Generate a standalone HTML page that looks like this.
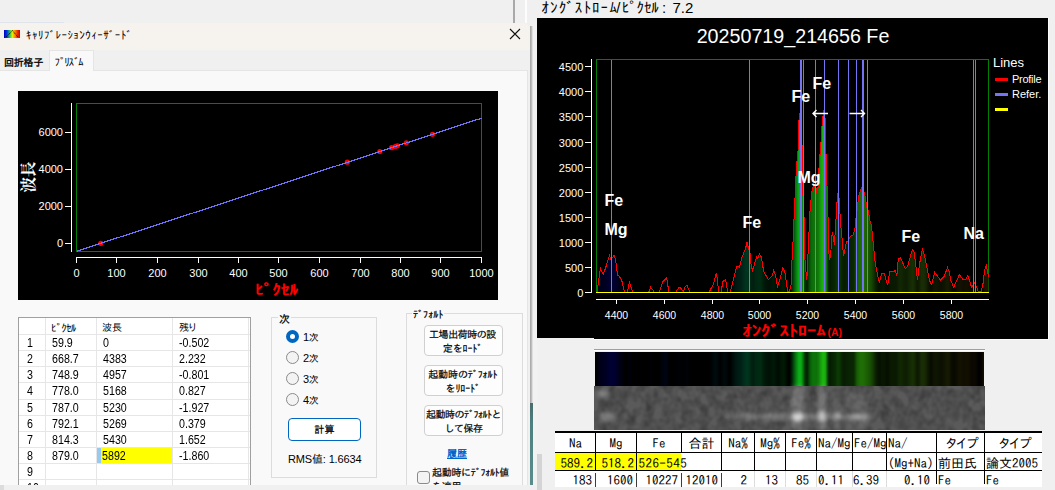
<!DOCTYPE html>
<html lang="ja"><head><meta charset="utf-8"><title>ｷｬﾘﾌﾞﾚｰｼｮﾝｳｨｰｻﾞｰﾄﾞ</title>
<style>
*{box-sizing:border-box;margin:0;padding:0}
html,body{width:1055px;height:490px;overflow:hidden;background:#f0f0f0}
body{position:relative;font-family:"Liberation Sans","IPAGothic",sans-serif;font-size:12px;color:#000}
.a{position:absolute}
.ui{font-family:"Liberation Sans","IPAGothic",sans-serif;font-size:12px;line-height:12px;white-space:nowrap}
.hk{font-family:"Liberation Sans","IPAGothic",sans-serif}
#dlg{left:0;top:23px;width:530px;height:462px;background:#f0f0f0;overflow:hidden;border-top-right-radius:7px}
#title{left:0;top:0;width:530px;height:27px;background:#f6f3ef}
#page{left:-1px;top:47px;width:529px;height:420px;background:#f9f9f9;border:1px solid #e5e5e5}
#tabsel{left:49px;top:27px;width:45px;height:21px;background:#f9f9f9;border:1px solid #e5e5e5;border-bottom:none}
.grp{border:1px solid #dcdcdc}
.btn{background:#fdfdfd;border:1px solid #d0d0d0;border-radius:4px;text-align:center}
.radio{width:13px;height:13px;border-radius:50%;border:1px solid #8a8a8a;background:#f3f3f3}
.radio.on{border:4.3px solid #0067c0;background:#fff}
table.g{border-collapse:collapse}
#grid{left:18px;top:294px;width:233px;height:180px;background:#fff;border:1px solid #a0a0a0;overflow:hidden}
#grid .vl{position:absolute;top:0;width:1px;height:200px;background:#e6e6e6}
#grid .hl{position:absolute;left:0;height:1px;width:231px;background:#e6e6e6}
#grid .t{position:absolute;font-size:12px;line-height:12px;white-space:nowrap;transform:scaleX(0.89);transform-origin:0 0}
#rt{left:555px;top:431px;width:487px;height:56px;background:#fff;overflow:hidden;font-family:"IPAGothic","Liberation Sans",sans-serif;font-size:13px;line-height:13px}
#rt .c{position:absolute;white-space:nowrap;overflow:hidden;height:17px;padding-top:3px}
#rt .v{position:absolute;width:1px;background:#000}
#rt .h{position:absolute;height:1px;background:#000;left:0;width:487px}
</style></head><body>
<div class="a" style="left:513px;top:0;width:2px;height:23px;background:#a9a9a9"></div>
<div class="a" style="left:525px;top:0;width:2px;height:23px;background:#fdfdfd"></div>
<div class="a" style="left:0;top:22px;width:64px;height:1px;background:#dfe3ea"></div>
<div class="a" style="left:533px;top:23px;width:4px;height:467px;background:#f2f2f2"></div>
<div class="a" style="left:1048px;top:18px;width:1.4px;height:322px;background:#fcfcfc"></div>
<div class="a" style="left:594px;top:339px;width:455px;height:1.2px;background:#fcfcfc"></div>
<div class="a hk" style="left:0;top:0px;font-size:15px;line-height:16px;white-space:nowrap"><span class="a" style="left:541.5px;letter-spacing:1.1px">ｵﾝｸﾞｽﾄﾛｰﾑ</span><span class="a" style="left:616.3px">/</span><span class="a" style="left:621.8px;letter-spacing:-0.2px">ﾋﾟｸｾﾙ</span><span class="a" style="left:662px">:</span><span class="a" style="left:672.5px">7.2</span></div>
<svg class="a" style="left:0;top:0" width="1055" height="490" viewBox="0 0 1055 490"><defs><linearGradient id="sg" gradientUnits="userSpaceOnUse" x1="596" x2="988.6" y1="0" y2="0"><stop offset="0.0000" stop-color="#000001"/>
<stop offset="0.0038" stop-color="#000008"/>
<stop offset="0.0076" stop-color="#000014"/>
<stop offset="0.0115" stop-color="#00001c"/>
<stop offset="0.0153" stop-color="#00001d"/>
<stop offset="0.0191" stop-color="#00001d"/>
<stop offset="0.0229" stop-color="#000021"/>
<stop offset="0.0267" stop-color="#000027"/>
<stop offset="0.0306" stop-color="#00002e"/>
<stop offset="0.0344" stop-color="#000031"/>
<stop offset="0.0382" stop-color="#000032"/>
<stop offset="0.0420" stop-color="#000032"/>
<stop offset="0.0458" stop-color="#000032"/>
<stop offset="0.0497" stop-color="#00002c"/>
<stop offset="0.0535" stop-color="#000022"/>
<stop offset="0.0573" stop-color="#00001a"/>
<stop offset="0.0611" stop-color="#000016"/>
<stop offset="0.0650" stop-color="#000011"/>
<stop offset="0.0688" stop-color="#00000a"/>
<stop offset="0.0726" stop-color="#000003"/>
<stop offset="0.0764" stop-color="#000000"/>
<stop offset="0.0802" stop-color="#000004"/>
<stop offset="0.0841" stop-color="#000009"/>
<stop offset="0.0879" stop-color="#00000a"/>
<stop offset="0.0917" stop-color="#000004"/>
<stop offset="0.0955" stop-color="#000000"/>
<stop offset="0.0993" stop-color="#000000"/>
<stop offset="0.1032" stop-color="#000000"/>
<stop offset="0.1070" stop-color="#000000"/>
<stop offset="0.1108" stop-color="#000000"/>
<stop offset="0.1146" stop-color="#000000"/>
<stop offset="0.1184" stop-color="#000000"/>
<stop offset="0.1223" stop-color="#000000"/>
<stop offset="0.1261" stop-color="#000000"/>
<stop offset="0.1299" stop-color="#000000"/>
<stop offset="0.1337" stop-color="#000001"/>
<stop offset="0.1375" stop-color="#000004"/>
<stop offset="0.1414" stop-color="#000005"/>
<stop offset="0.1452" stop-color="#000003"/>
<stop offset="0.1490" stop-color="#000001"/>
<stop offset="0.1528" stop-color="#000000"/>
<stop offset="0.1566" stop-color="#000000"/>
<stop offset="0.1605" stop-color="#000001"/>
<stop offset="0.1643" stop-color="#000106"/>
<stop offset="0.1681" stop-color="#00020b"/>
<stop offset="0.1719" stop-color="#00030f"/>
<stop offset="0.1758" stop-color="#000312"/>
<stop offset="0.1796" stop-color="#000310"/>
<stop offset="0.1834" stop-color="#000209"/>
<stop offset="0.1872" stop-color="#000002"/>
<stop offset="0.1910" stop-color="#000000"/>
<stop offset="0.1949" stop-color="#000000"/>
<stop offset="0.1987" stop-color="#000000"/>
<stop offset="0.2025" stop-color="#000000"/>
<stop offset="0.2063" stop-color="#000003"/>
<stop offset="0.2101" stop-color="#000105"/>
<stop offset="0.2140" stop-color="#000106"/>
<stop offset="0.2178" stop-color="#000104"/>
<stop offset="0.2216" stop-color="#000103"/>
<stop offset="0.2254" stop-color="#000105"/>
<stop offset="0.2292" stop-color="#000208"/>
<stop offset="0.2331" stop-color="#000207"/>
<stop offset="0.2369" stop-color="#000103"/>
<stop offset="0.2407" stop-color="#000000"/>
<stop offset="0.2445" stop-color="#000000"/>
<stop offset="0.2483" stop-color="#000000"/>
<stop offset="0.2522" stop-color="#000000"/>
<stop offset="0.2560" stop-color="#000000"/>
<stop offset="0.2598" stop-color="#000000"/>
<stop offset="0.2636" stop-color="#000000"/>
<stop offset="0.2674" stop-color="#000000"/>
<stop offset="0.2713" stop-color="#000000"/>
<stop offset="0.2751" stop-color="#000000"/>
<stop offset="0.2789" stop-color="#000000"/>
<stop offset="0.2827" stop-color="#000000"/>
<stop offset="0.2866" stop-color="#000000"/>
<stop offset="0.2904" stop-color="#000102"/>
<stop offset="0.2942" stop-color="#000305"/>
<stop offset="0.2980" stop-color="#000609"/>
<stop offset="0.3018" stop-color="#000a0d"/>
<stop offset="0.3057" stop-color="#000b0f"/>
<stop offset="0.3095" stop-color="#00080a"/>
<stop offset="0.3133" stop-color="#000203"/>
<stop offset="0.3171" stop-color="#000101"/>
<stop offset="0.3209" stop-color="#000506"/>
<stop offset="0.3248" stop-color="#00090a"/>
<stop offset="0.3286" stop-color="#000a0a"/>
<stop offset="0.3324" stop-color="#000707"/>
<stop offset="0.3362" stop-color="#000202"/>
<stop offset="0.3400" stop-color="#000000"/>
<stop offset="0.3439" stop-color="#000403"/>
<stop offset="0.3477" stop-color="#000a08"/>
<stop offset="0.3515" stop-color="#00100d"/>
<stop offset="0.3553" stop-color="#001611"/>
<stop offset="0.3591" stop-color="#001a13"/>
<stop offset="0.3630" stop-color="#001c14"/>
<stop offset="0.3668" stop-color="#001f15"/>
<stop offset="0.3706" stop-color="#002417"/>
<stop offset="0.3744" stop-color="#00291a"/>
<stop offset="0.3782" stop-color="#002e1c"/>
<stop offset="0.3821" stop-color="#00331d"/>
<stop offset="0.3859" stop-color="#00341d"/>
<stop offset="0.3897" stop-color="#00301a"/>
<stop offset="0.3935" stop-color="#002714"/>
<stop offset="0.3974" stop-color="#002010"/>
<stop offset="0.4012" stop-color="#001f0f"/>
<stop offset="0.4050" stop-color="#002411"/>
<stop offset="0.4088" stop-color="#002712"/>
<stop offset="0.4126" stop-color="#002a13"/>
<stop offset="0.4165" stop-color="#002b12"/>
<stop offset="0.4203" stop-color="#002911"/>
<stop offset="0.4241" stop-color="#00220d"/>
<stop offset="0.4279" stop-color="#001b0a"/>
<stop offset="0.4317" stop-color="#001608"/>
<stop offset="0.4356" stop-color="#001307"/>
<stop offset="0.4394" stop-color="#001206"/>
<stop offset="0.4432" stop-color="#001206"/>
<stop offset="0.4470" stop-color="#001506"/>
<stop offset="0.4508" stop-color="#001707"/>
<stop offset="0.4547" stop-color="#001706"/>
<stop offset="0.4585" stop-color="#001104"/>
<stop offset="0.4623" stop-color="#000d03"/>
<stop offset="0.4661" stop-color="#000d03"/>
<stop offset="0.4699" stop-color="#001304"/>
<stop offset="0.4738" stop-color="#001905"/>
<stop offset="0.4776" stop-color="#001b05"/>
<stop offset="0.4814" stop-color="#001604"/>
<stop offset="0.4852" stop-color="#000c02"/>
<stop offset="0.4890" stop-color="#000400"/>
<stop offset="0.4929" stop-color="#000300"/>
<stop offset="0.4967" stop-color="#001403"/>
<stop offset="0.5005" stop-color="#013108"/>
<stop offset="0.5043" stop-color="#03530c"/>
<stop offset="0.5082" stop-color="#057211"/>
<stop offset="0.5120" stop-color="#088e14"/>
<stop offset="0.5158" stop-color="#0aa716"/>
<stop offset="0.5196" stop-color="#0cb216"/>
<stop offset="0.5234" stop-color="#0ba013"/>
<stop offset="0.5273" stop-color="#09770d"/>
<stop offset="0.5311" stop-color="#054407"/>
<stop offset="0.5349" stop-color="#032503"/>
<stop offset="0.5387" stop-color="#032703"/>
<stop offset="0.5425" stop-color="#064306"/>
<stop offset="0.5464" stop-color="#0a5e08"/>
<stop offset="0.5502" stop-color="#0c6d09"/>
<stop offset="0.5540" stop-color="#0d720a"/>
<stop offset="0.5578" stop-color="#0e730a"/>
<stop offset="0.5616" stop-color="#0e7109"/>
<stop offset="0.5655" stop-color="#10790a"/>
<stop offset="0.5693" stop-color="#138b0b"/>
<stop offset="0.5731" stop-color="#16a00d"/>
<stop offset="0.5769" stop-color="#1ab00e"/>
<stop offset="0.5807" stop-color="#1bb60f"/>
<stop offset="0.5846" stop-color="#19a10d"/>
<stop offset="0.5884" stop-color="#106207"/>
<stop offset="0.5922" stop-color="#072b03"/>
<stop offset="0.5960" stop-color="#041c02"/>
<stop offset="0.5998" stop-color="#052002"/>
<stop offset="0.6037" stop-color="#062402"/>
<stop offset="0.6075" stop-color="#072602"/>
<stop offset="0.6113" stop-color="#092f03"/>
<stop offset="0.6151" stop-color="#0b3904"/>
<stop offset="0.6190" stop-color="#0b3904"/>
<stop offset="0.6228" stop-color="#092f03"/>
<stop offset="0.6266" stop-color="#072402"/>
<stop offset="0.6304" stop-color="#061e02"/>
<stop offset="0.6342" stop-color="#061d01"/>
<stop offset="0.6381" stop-color="#072102"/>
<stop offset="0.6419" stop-color="#082302"/>
<stop offset="0.6457" stop-color="#082402"/>
<stop offset="0.6495" stop-color="#092502"/>
<stop offset="0.6533" stop-color="#092602"/>
<stop offset="0.6572" stop-color="#0b2b02"/>
<stop offset="0.6610" stop-color="#114203"/>
<stop offset="0.6648" stop-color="#185a05"/>
<stop offset="0.6686" stop-color="#1b6405"/>
<stop offset="0.6724" stop-color="#1d6b05"/>
<stop offset="0.6763" stop-color="#1e6d05"/>
<stop offset="0.6801" stop-color="#1f6d06"/>
<stop offset="0.6839" stop-color="#1e6805"/>
<stop offset="0.6877" stop-color="#1d6205"/>
<stop offset="0.6915" stop-color="#1c5b05"/>
<stop offset="0.6954" stop-color="#1a5505"/>
<stop offset="0.6992" stop-color="#184d04"/>
<stop offset="0.7030" stop-color="#154304"/>
<stop offset="0.7068" stop-color="#113503"/>
<stop offset="0.7106" stop-color="#0d2702"/>
<stop offset="0.7145" stop-color="#091c01"/>
<stop offset="0.7183" stop-color="#071401"/>
<stop offset="0.7221" stop-color="#061101"/>
<stop offset="0.7259" stop-color="#071301"/>
<stop offset="0.7298" stop-color="#081601"/>
<stop offset="0.7336" stop-color="#081601"/>
<stop offset="0.7374" stop-color="#071201"/>
<stop offset="0.7412" stop-color="#050e01"/>
<stop offset="0.7450" stop-color="#071101"/>
<stop offset="0.7489" stop-color="#091701"/>
<stop offset="0.7527" stop-color="#0a1902"/>
<stop offset="0.7565" stop-color="#0a1a02"/>
<stop offset="0.7603" stop-color="#0a1902"/>
<stop offset="0.7641" stop-color="#0a1902"/>
<stop offset="0.7680" stop-color="#0d1e02"/>
<stop offset="0.7718" stop-color="#102603"/>
<stop offset="0.7756" stop-color="#112703"/>
<stop offset="0.7794" stop-color="#102503"/>
<stop offset="0.7832" stop-color="#0f2102"/>
<stop offset="0.7871" stop-color="#0e1f02"/>
<stop offset="0.7909" stop-color="#0e1e02"/>
<stop offset="0.7947" stop-color="#102203"/>
<stop offset="0.7985" stop-color="#122703"/>
<stop offset="0.8023" stop-color="#152c04"/>
<stop offset="0.8062" stop-color="#172f04"/>
<stop offset="0.8100" stop-color="#162c04"/>
<stop offset="0.8138" stop-color="#112303"/>
<stop offset="0.8176" stop-color="#0d1902"/>
<stop offset="0.8214" stop-color="#0e1a02"/>
<stop offset="0.8253" stop-color="#132404"/>
<stop offset="0.8291" stop-color="#182c05"/>
<stop offset="0.8329" stop-color="#1a2e05"/>
<stop offset="0.8367" stop-color="#182a05"/>
<stop offset="0.8406" stop-color="#152304"/>
<stop offset="0.8444" stop-color="#101a03"/>
<stop offset="0.8482" stop-color="#0b1302"/>
<stop offset="0.8520" stop-color="#080d01"/>
<stop offset="0.8558" stop-color="#090e01"/>
<stop offset="0.8597" stop-color="#0c1302"/>
<stop offset="0.8635" stop-color="#0e1603"/>
<stop offset="0.8673" stop-color="#0e1503"/>
<stop offset="0.8711" stop-color="#0d1302"/>
<stop offset="0.8749" stop-color="#0c1102"/>
<stop offset="0.8788" stop-color="#0c1002"/>
<stop offset="0.8826" stop-color="#0d1102"/>
<stop offset="0.8864" stop-color="#0f1402"/>
<stop offset="0.8902" stop-color="#121702"/>
<stop offset="0.8940" stop-color="#151a03"/>
<stop offset="0.8979" stop-color="#151802"/>
<stop offset="0.9017" stop-color="#111302"/>
<stop offset="0.9055" stop-color="#0b0d01"/>
<stop offset="0.9093" stop-color="#080900"/>
<stop offset="0.9131" stop-color="#080900"/>
<stop offset="0.9170" stop-color="#0b0b01"/>
<stop offset="0.9208" stop-color="#0f0f01"/>
<stop offset="0.9246" stop-color="#121101"/>
<stop offset="0.9284" stop-color="#131101"/>
<stop offset="0.9322" stop-color="#110f00"/>
<stop offset="0.9361" stop-color="#100e00"/>
<stop offset="0.9399" stop-color="#100e00"/>
<stop offset="0.9437" stop-color="#120f00"/>
<stop offset="0.9475" stop-color="#120f00"/>
<stop offset="0.9513" stop-color="#0f0c00"/>
<stop offset="0.9552" stop-color="#0b0800"/>
<stop offset="0.9590" stop-color="#0a0700"/>
<stop offset="0.9628" stop-color="#0b0800"/>
<stop offset="0.9666" stop-color="#0a0700"/>
<stop offset="0.9705" stop-color="#060400"/>
<stop offset="0.9743" stop-color="#020100"/>
<stop offset="0.9781" stop-color="#010000"/>
<stop offset="0.9819" stop-color="#050300"/>
<stop offset="0.9857" stop-color="#0f0a00"/>
<stop offset="0.9896" stop-color="#1b1100"/>
<stop offset="0.9934" stop-color="#211400"/>
<stop offset="0.9972" stop-color="#1e1200"/></linearGradient><filter id="nz" x="0" y="0" width="100%" height="100%"><feTurbulence type="fractalNoise" baseFrequency="0.11 0.1" numOctaves="2" seed="7"/><feColorMatrix type="matrix" values="0 0 0 0 0  0 0 0 0 0  0 0 0 0 0  0.45 0.35 0 0 -0.28"/><feComposite in2="SourceGraphic" operator="in"/></filter><filter id="bl"><feGaussianBlur stdDeviation="2.2"/></filter></defs><rect x="537" y="18" width="511" height="320" fill="#000"/><rect x="594" y="338" width="454" height="1" fill="#000"/><rect x="596.5" y="59.5" width="392" height="233" fill="none" stroke="#008000"/><polygon points="596.5,292 597.1,292.1 599.0,278.3 600.4,268.4 603.3,274.5 605.6,267.9 609.4,255.4 610.9,259.4 614.2,255.4 615.6,259.8 617.5,275.0 619.4,276.4 621.8,280.7 624.6,292.1 627.4,292.1 629.3,282.1 632.7,292.1 648.8,292.1 650.7,287.3 653.7,291.1 654.1,292.1 659.2,292.1 663.0,281.6 666.3,278.3 667.3,280.7 668.7,292.1 675.8,292.1 679.1,287.1 681.0,288.3 683.4,291.6 685.0,286.9 686.9,285.2 689.7,292.1 709.2,292.1 713.4,284.0 716.3,273.4 717.2,278.3 718.6,292.1 721.0,292.1 722.9,281.6 725.6,279.3 727.7,292.1 730.3,292.1 733.3,279.3 736.9,266.0 739.5,267.0 741.9,257.5 745.7,248.0 747.0,242.1 750.2,254.2 750.6,262.2 752.5,270.6 756.6,257.0 758.0,258.4 759.4,253.5 761.3,257.0 763.7,271.7 768.4,279.5 772.2,276.0 773.6,270.6 775.5,275.0 777.4,286.4 779.8,280.2 780.0,279.3 782.8,268.4 784.7,270.7 787.6,291.6 789.5,291.1 791.4,284.0 791.8,263.2 792.8,248.0 793.7,224.3 794.7,206.3 795.6,183.5 796.6,165.0 798.0,150.8 798.5,129.0 799.4,113.8 800.4,113.8 802.4,151.7 802.6,156.0 802.7,187.8 804.5,228.1 804.8,257.0 806.1,272.6 806.7,280.2 807.5,270.7 808.0,254.2 808.9,235.2 809.6,215.3 811.8,192.0 813.4,186.1 816.0,187.8 817.2,193.4 818.1,186.1 819.3,162.2 820.8,146.0 821.7,129.9 822.7,118.1 823.6,110.9 824.5,110.9 825.5,124.2 826.0,153.6 826.9,182.5 827.9,211.5 828.5,243.7 829.3,259.4 830.7,257.0 831.5,238.0 832.4,232.3 833.6,239.9 834.5,245.1 835.5,226.2 836.9,206.3 837.3,193.0 839.5,199.1 839.7,208.6 840.7,224.7 842.1,239.0 843.5,256.1 844.5,251.8 846.4,241.8 848.2,240.9 850.1,236.6 853.0,235.2 854.9,229.0 855.8,219.1 857.3,208.6 858.7,195.8 860.1,191.5 861.5,188.2 864.4,193.0 865.3,197.7 866.7,206.7 868.6,211.5 869.6,219.1 871.5,226.2 872.4,235.2 873.4,244.7 874.8,259.4 876.7,270.7 878.6,279.3 879.3,282.6 881.6,273.6 884.5,273.6 886.4,281.2 887.8,284.5 889.7,271.2 893.5,271.7 895.4,270.3 896.8,276.4 898.2,259.4 900.4,257.5 905.3,268.7 907.7,266.0 912.4,249.4 914.3,252.7 917.5,279.8 919.5,264.1 922.4,249.4 924.3,254.6 929.5,280.7 931.6,284.5 934.7,272.5 940.4,280.2 944.2,276.4 947.5,267.4 948.9,270.7 950.8,280.2 953.7,287.3 959.4,274.5 962.7,279.3 966.0,279.3 967.7,275.5 969.8,281.2 971.5,287.3 972.7,285.9 974.3,282.6 976.5,286.9 978.4,291.6 981.2,291.6 983.1,283.1 984.5,270.7 986.4,265.5 987.4,270.7 988.5,277.4 988.5,292" fill="url(#sg)"/><polyline points="597.1,292.1 599.0,278.3 600.4,268.4 603.3,274.5 605.6,267.9 609.4,255.4 610.9,259.4 614.2,255.4 615.6,259.8 617.5,275.0 619.4,276.4 621.8,280.7 624.6,292.1 627.4,292.1 629.3,282.1 632.7,292.1 648.8,292.1 650.7,287.3 653.7,291.1 654.1,292.1 659.2,292.1 663.0,281.6 666.3,278.3 667.3,280.7 668.7,292.1 675.8,292.1 679.1,287.1 681.0,288.3 683.4,291.6 685.0,286.9 686.9,285.2 689.7,292.1 709.2,292.1 713.4,284.0 716.3,273.4 717.2,278.3 718.6,292.1 721.0,292.1 722.9,281.6 725.6,279.3 727.7,292.1 730.3,292.1 733.3,279.3 736.9,266.0 739.5,267.0 741.9,257.5 745.7,248.0 747.0,242.1 750.2,254.2 750.6,262.2 752.5,270.6 756.6,257.0 758.0,258.4 759.4,253.5 761.3,257.0 763.7,271.7 768.4,279.5 772.2,276.0 773.6,270.6 775.5,275.0 777.4,286.4 779.8,280.2 780.0,279.3 782.8,268.4 784.7,270.7 787.6,291.6 789.5,291.1 791.4,284.0 791.8,263.2 792.8,248.0 793.7,224.3 794.7,206.3 795.6,183.5 796.6,165.0 798.0,150.8 798.5,129.0 799.4,113.8 800.4,113.8 802.4,151.7 802.6,156.0 802.7,187.8 804.5,228.1 804.8,257.0 806.1,272.6 806.7,280.2 807.5,270.7 808.0,254.2 808.9,235.2 809.6,215.3 811.8,192.0 813.4,186.1 816.0,187.8 817.2,193.4 818.1,186.1 819.3,162.2 820.8,146.0 821.7,129.9 822.7,118.1 823.6,110.9 824.5,110.9 825.5,124.2 826.0,153.6 826.9,182.5 827.9,211.5 828.5,243.7 829.3,259.4 830.7,257.0 831.5,238.0 832.4,232.3 833.6,239.9 834.5,245.1 835.5,226.2 836.9,206.3 837.3,193.0 839.5,199.1 839.7,208.6 840.7,224.7 842.1,239.0 843.5,256.1 844.5,251.8 846.4,241.8 848.2,240.9 850.1,236.6 853.0,235.2 854.9,229.0 855.8,219.1 857.3,208.6 858.7,195.8 860.1,191.5 861.5,188.2 864.4,193.0 865.3,197.7 866.7,206.7 868.6,211.5 869.6,219.1 871.5,226.2 872.4,235.2 873.4,244.7 874.8,259.4 876.7,270.7 878.6,279.3 879.3,282.6 881.6,273.6 884.5,273.6 886.4,281.2 887.8,284.5 889.7,271.2 893.5,271.7 895.4,270.3 896.8,276.4 898.2,259.4 900.4,257.5 905.3,268.7 907.7,266.0 912.4,249.4 914.3,252.7 917.5,279.8 919.5,264.1 922.4,249.4 924.3,254.6 929.5,280.7 931.6,284.5 934.7,272.5 940.4,280.2 944.2,276.4 947.5,267.4 948.9,270.7 950.8,280.2 953.7,287.3 959.4,274.5 962.7,279.3 966.0,279.3 967.7,275.5 969.8,281.2 971.5,287.3 972.7,285.9 974.3,282.6 976.5,286.9 978.4,291.6 981.2,291.6 983.1,283.1 984.5,270.7 986.4,265.5 987.4,270.7 988.5,277.4" fill="none" stroke="#ff0000" stroke-width="1" stroke-linejoin="miter" shape-rendering="crispEdges"/><rect x="611" y="60" width="1" height="232" fill="#7474f4"/><rect x="749" y="60" width="1" height="232" fill="#7474f4"/><rect x="800" y="60" width="2" height="232" fill="#7474f4"/><rect x="803" y="60" width="1" height="232" fill="#7474f4"/><rect x="815" y="60" width="1" height="232" fill="#7474f4"/><rect x="824" y="60" width="1" height="232" fill="#7474f4"/><rect x="838" y="60" width="1" height="232" fill="#7474f4"/><rect x="848" y="60" width="1" height="232" fill="#7474f4"/><rect x="856" y="60" width="1" height="232" fill="#7474f4"/><rect x="862" y="60" width="2" height="232" fill="#7474f4"/><rect x="867" y="60" width="1" height="232" fill="#7474f4"/><rect x="973" y="60" width="1" height="232" fill="#7474f4"/><rect x="975" y="60" width="1" height="232" fill="#7474f4"/><rect x="596" y="292" width="393" height="1" fill="#ffff00"/><line x1="591.5" y1="59" x2="591.5" y2="293" stroke="#fff"/><line x1="596" y1="299.5" x2="989" y2="299.5" stroke="#fff"/><line x1="585" y1="292.5" x2="591" y2="292.5" stroke="#fff"/><text x="583.3" y="297.0" fill="#fff" font-family="Liberation Sans,sans-serif" font-size="11" text-anchor="end">0</text><line x1="585" y1="267.5" x2="591" y2="267.5" stroke="#fff"/><text x="583.3" y="272.0" fill="#fff" font-family="Liberation Sans,sans-serif" font-size="11" text-anchor="end">500</text><line x1="585" y1="242.5" x2="591" y2="242.5" stroke="#fff"/><text x="583.3" y="247.0" fill="#fff" font-family="Liberation Sans,sans-serif" font-size="11" text-anchor="end">1000</text><line x1="585" y1="217.5" x2="591" y2="217.5" stroke="#fff"/><text x="583.3" y="222.0" fill="#fff" font-family="Liberation Sans,sans-serif" font-size="11" text-anchor="end">1500</text><line x1="585" y1="192.5" x2="591" y2="192.5" stroke="#fff"/><text x="583.3" y="197.0" fill="#fff" font-family="Liberation Sans,sans-serif" font-size="11" text-anchor="end">2000</text><line x1="585" y1="167.5" x2="591" y2="167.5" stroke="#fff"/><text x="583.3" y="172.0" fill="#fff" font-family="Liberation Sans,sans-serif" font-size="11" text-anchor="end">2500</text><line x1="585" y1="142.5" x2="591" y2="142.5" stroke="#fff"/><text x="583.3" y="147.0" fill="#fff" font-family="Liberation Sans,sans-serif" font-size="11" text-anchor="end">3000</text><line x1="585" y1="116.5" x2="591" y2="116.5" stroke="#fff"/><text x="583.3" y="121.0" fill="#fff" font-family="Liberation Sans,sans-serif" font-size="11" text-anchor="end">3500</text><line x1="585" y1="91.5" x2="591" y2="91.5" stroke="#fff"/><text x="583.3" y="96.0" fill="#fff" font-family="Liberation Sans,sans-serif" font-size="11" text-anchor="end">4000</text><line x1="585" y1="66.5" x2="591" y2="66.5" stroke="#fff"/><text x="583.3" y="71.0" fill="#fff" font-family="Liberation Sans,sans-serif" font-size="11" text-anchor="end">4500</text><line x1="616.5" y1="299" x2="616.5" y2="304" stroke="#fff"/><text x="616.5" y="318.5" fill="#fff" font-family="Liberation Sans,sans-serif" font-size="10.5" text-anchor="middle">4400</text><line x1="664.5" y1="299" x2="664.5" y2="304" stroke="#fff"/><text x="664.5" y="318.5" fill="#fff" font-family="Liberation Sans,sans-serif" font-size="10.5" text-anchor="middle">4600</text><line x1="712.5" y1="299" x2="712.5" y2="304" stroke="#fff"/><text x="712.5" y="318.5" fill="#fff" font-family="Liberation Sans,sans-serif" font-size="10.5" text-anchor="middle">4800</text><line x1="759.5" y1="299" x2="759.5" y2="304" stroke="#fff"/><text x="759.5" y="318.5" fill="#fff" font-family="Liberation Sans,sans-serif" font-size="10.5" text-anchor="middle">5000</text><line x1="807.5" y1="299" x2="807.5" y2="304" stroke="#fff"/><text x="807.5" y="318.5" fill="#fff" font-family="Liberation Sans,sans-serif" font-size="10.5" text-anchor="middle">5200</text><line x1="855.5" y1="299" x2="855.5" y2="304" stroke="#fff"/><text x="855.5" y="318.5" fill="#fff" font-family="Liberation Sans,sans-serif" font-size="10.5" text-anchor="middle">5400</text><line x1="903.5" y1="299" x2="903.5" y2="304" stroke="#fff"/><text x="903.5" y="318.5" fill="#fff" font-family="Liberation Sans,sans-serif" font-size="10.5" text-anchor="middle">5600</text><line x1="951.5" y1="299" x2="951.5" y2="304" stroke="#fff"/><text x="951.5" y="318.5" fill="#fff" font-family="Liberation Sans,sans-serif" font-size="10.5" text-anchor="middle">5800</text><text x="793" y="43" fill="#fff" font-family="Liberation Sans,sans-serif" font-size="19.7" text-anchor="middle">20250719_214656 Fe</text><text x="742.5" y="336" fill="#ff0000" font-family="Liberation Sans,IPAGothic,sans-serif" font-weight="bold" font-size="15" textLength="83" lengthAdjust="spacingAndGlyphs">ｵﾝｸﾞｽﾄﾛｰﾑ</text><text x="827.5" y="336" fill="#ff0000" font-family="Liberation Sans,sans-serif" font-weight="bold" font-size="11.5" textLength="14.5" lengthAdjust="spacingAndGlyphs">(A)</text><text x="993" y="67" fill="#fff" font-family="Liberation Sans,sans-serif" font-size="13">Lines</text><rect x="995" y="78" width="13" height="3" fill="#ff0000"/><rect x="995" y="93" width="13" height="3" fill="#7474f4"/><rect x="995" y="108" width="13" height="3" fill="#ffff00"/><text x="1012" y="83" fill="#fff" font-family="Liberation Sans,sans-serif" font-size="11" textLength="29.5">Profile</text><text x="1012" y="98" fill="#fff" font-family="Liberation Sans,sans-serif" font-size="11">Refer.</text><text x="604.5" y="205.5" fill="#fff" font-family="Liberation Sans,sans-serif" font-weight="bold" font-size="16">Fe</text><text x="604.5" y="235.0" fill="#fff" font-family="Liberation Sans,sans-serif" font-weight="bold" font-size="16">Mg</text><text x="742.5" y="227.5" fill="#fff" font-family="Liberation Sans,sans-serif" font-weight="bold" font-size="16">Fe</text><text x="791.5" y="101.5" fill="#fff" font-family="Liberation Sans,sans-serif" font-weight="bold" font-size="16">Fe</text><text x="812.5" y="88.5" fill="#fff" font-family="Liberation Sans,sans-serif" font-weight="bold" font-size="16">Fe</text><text x="797.5" y="183.0" fill="#fff" font-family="Liberation Sans,sans-serif" font-weight="bold" font-size="16">Mg</text><text x="901.5" y="241.5" fill="#fff" font-family="Liberation Sans,sans-serif" font-weight="bold" font-size="16">Fe</text><text x="963.5" y="238.5" fill="#fff" font-family="Liberation Sans,sans-serif" font-weight="bold" font-size="16">Na</text><path d="M813 113.5 H828 M816.5 110 L813 113.5 L816.5 117" stroke="#fff" stroke-width="1.4" fill="none"/><path d="M849.5 113.5 H864.5 M861 110 L864.5 113.5 L861 117" stroke="#fff" stroke-width="1.4" fill="none"/><rect x="594" y="349" width="391" height="1" fill="#a0a0a0"/><rect x="594" y="350" width="391" height="1" fill="#fff"/><rect x="595" y="352" width="389" height="34" fill="#000"/><rect x="596" y="352" width="388" height="34" fill="url(#sg)"/><rect x="594" y="386" width="391" height="44" fill="#5a5a5a"/><rect x="594" y="386" width="391" height="44" fill="#fff" filter="url(#nz)"/><g filter="url(#bl)" fill="#fff"><ellipse cx="798" cy="417" rx="6" ry="4.5" opacity="0.6"/><ellipse cx="822" cy="416" rx="4" ry="6" opacity="0.5"/><ellipse cx="838" cy="416" rx="3" ry="4" opacity="0.35"/><ellipse cx="860" cy="417" rx="9" ry="3.5" opacity="0.3"/><ellipse cx="800" cy="416.5" rx="75" ry="3.5" opacity="0.22"/><rect x="792" y="386" width="11" height="44" opacity="0.2"/><rect x="818" y="386" width="8" height="44" opacity="0.17"/><rect x="834" y="392" width="5" height="38" opacity="0.1"/><rect x="846" y="392" width="22" height="38" opacity="0.07"/><ellipse cx="603" cy="394" rx="6" ry="4" opacity="0.25"/><ellipse cx="607" cy="417" rx="8" ry="4" opacity="0.25"/></g></svg>
<div id="rt" class="a"><div class="a" style="left:0;top:22px;width:126px;height:17px;background:#ffff00"></div><div class="h" style="top:0;height:2px"></div><div class="h" style="top:21px"></div><div class="h" style="top:39px"></div><div class="v" style="left:40px;top:0;height:39px"></div><div class="v" style="left:81px;top:0;height:39px"></div><div class="v" style="left:126px;top:0;height:39px"></div><div class="v" style="left:166px;top:0;height:39px"></div><div class="v" style="left:199px;top:0;height:39px"></div><div class="v" style="left:230px;top:0;height:39px"></div><div class="v" style="left:261px;top:0;height:39px"></div><div class="v" style="left:297px;top:0;height:39px"></div><div class="v" style="left:331px;top:0;height:39px"></div><div class="v" style="left:381px;top:0;height:39px"></div><div class="v" style="left:429px;top:0;height:39px"></div><div class="a" style="left:126px;top:22px;width:30px;height:17px;background:#fff"></div><div class="v" style="left:40px;top:42px;height:14px;background:#3c3c3c;width:0.7px"></div><div class="v" style="left:81px;top:42px;height:14px;background:#3c3c3c;width:0.7px"></div><div class="v" style="left:126px;top:42px;height:14px;background:#3c3c3c;width:0.7px"></div><div class="v" style="left:166px;top:42px;height:14px;background:#3c3c3c;width:0.7px"></div><div class="v" style="left:199px;top:40px;height:16px;background:#dcdcdc"></div><div class="v" style="left:230px;top:40px;height:16px;background:#dcdcdc"></div><div class="v" style="left:261px;top:40px;height:16px;background:#dcdcdc"></div><div class="v" style="left:297px;top:40px;height:16px;background:#dcdcdc"></div><div class="v" style="left:331px;top:40px;height:16px;background:#dcdcdc"></div><div class="v" style="left:381px;top:40px;height:13px"></div><div class="v" style="left:429px;top:40px;height:13px"></div><div class="c" style="left:1px;top:3px;width:39px;text-align:center;">Na</div><div class="c" style="left:41px;top:3px;width:40px;text-align:center;">Mg</div><div class="c" style="left:82px;top:3px;width:44px;text-align:center;">Fe</div><div class="c" style="left:127px;top:3px;width:39px;text-align:center;">合計</div><div class="c" style="left:167px;top:3px;width:32px;text-align:center;">Na%</div><div class="c" style="left:200px;top:3px;width:30px;text-align:center;">Mg%</div><div class="c" style="left:231px;top:3px;width:30px;text-align:center;">Fe%</div><div class="c" style="left:262px;top:3px;width:35px;text-align:left;padding-left:1px;">Na/Mg</div><div class="c" style="left:298px;top:3px;width:33px;text-align:left;padding-left:1px;">Fe/Mg</div><div class="c" style="left:332px;top:3px;width:49px;text-align:left;padding-left:1px;">Na/</div><div class="c" style="left:382px;top:3px;width:47px;text-align:center;"><span style="letter-spacing:-2.6px">タイプ</span></div><div class="c" style="left:430px;top:3px;width:57px;text-align:center;"><span style="letter-spacing:-2.6px">タイプ</span></div><div class="c" style="left:1px;top:23px;width:39px;text-align:right;padding-right:2px;">589.2</div><div class="c" style="left:41px;top:23px;width:40px;text-align:right;padding-right:2px;">518.2</div><div class="c" style="left:82px;top:23px;width:80px;padding-left:1.5px;overflow:visible;letter-spacing:0.45px">526-545</div><div class="c" style="left:332px;top:23px;width:49px;text-align:left;padding-left:1px;">(Mg+Na)</div><div class="c" style="left:382px;top:23px;width:47px;text-align:left;padding-left:1px;">前田氏</div><div class="c" style="left:430px;top:23px;width:57px;text-align:left;padding-left:1px;">論文2005</div><div class="c" style="left:1px;top:40px;width:39px;text-align:right;padding-right:2px;padding-right:3px;">183</div><div class="c" style="left:41px;top:40px;width:40px;text-align:right;padding-right:2px;padding-right:3px;">1600</div><div class="c" style="left:82px;top:40px;width:44px;text-align:right;padding-right:2px;padding-right:3px;">10227</div><div class="c" style="left:127px;top:40px;width:39px;text-align:right;padding-right:2px;padding-right:3px;">12010</div><div class="c" style="left:167px;top:40px;width:32px;text-align:right;padding-right:2px;padding-right:7px;">2</div><div class="c" style="left:200px;top:40px;width:30px;text-align:right;padding-right:2px;padding-right:7px;">13</div><div class="c" style="left:231px;top:40px;width:30px;text-align:right;padding-right:2px;padding-right:7px;">85</div><div class="c" style="left:262px;top:40px;width:35px;text-align:right;padding-right:2px;padding-right:8px;">0.11</div><div class="c" style="left:298px;top:40px;width:33px;text-align:right;padding-right:2px;padding-right:8px;">6.39</div><div class="c" style="left:332px;top:40px;width:49px;text-align:right;padding-right:2px;padding-right:6px;">0.10</div><div class="c" style="left:382px;top:40px;width:47px;text-align:left;padding-left:1px;">Fe</div><div class="c" style="left:430px;top:40px;width:57px;text-align:left;padding-left:1px;">Fe</div></div>
<div class="a" style="left:537px;top:454px;width:5px;height:36px;background:#d4d4d4"></div>
<div class="a" style="left:530px;top:26px;width:3.4px;height:377px;background:linear-gradient(to right,#a6a6a6 0,#b4b4b4 40%,#dcdcdc 80%,#ececec 100%)"></div>
<div class="a" style="left:530px;top:403px;width:2.7px;height:82px;background:linear-gradient(to bottom,#4a6c6c 0,#4f8080 25%,#5a8c8c 100%)"></div>

<div id="dlg" class="a">
 <div id="title" class="a"><svg class="a" style="left:4px;top:7px" width="16" height="8" viewBox="0 0 16 8"><defs><linearGradient id="ig" x1="0" x2="1" y1="0" y2="0"><stop offset="0" stop-color="#0000c8"/><stop offset="0.18" stop-color="#0038d8"/><stop offset="0.36" stop-color="#20c058"/><stop offset="0.52" stop-color="#e8f000"/><stop offset="0.68" stop-color="#ff8c00"/><stop offset="0.86" stop-color="#f02000"/><stop offset="1" stop-color="#b01010"/></linearGradient></defs><rect width="16" height="8" fill="url(#ig)"/><path d="M2.5 6.7 L8.5 0.6 L13.8 7" stroke="#000" stroke-width="1" fill="none" stroke-dasharray="1.1 0.9" stroke-width="1.2"/></svg>
  <div class="a ui hk" style="left:26px;top:6px;font-size:11px;letter-spacing:0.48px">ｷｬﾘﾌﾞﾚｰｼｮﾝｳｨｰｻﾞｰﾄﾞ</div>
  <svg class="a" style="left:509px;top:5px" width="12" height="12" viewBox="0 0 12 12"><path d="M1 1 L11 11 M11 1 L1 11" stroke="#111" stroke-width="1.1" fill="none"/></svg>
 </div>
 <div id="page" class="a"></div>
 <div id="tabsel" class="a"></div>
 <div class="a ui hk" style="left:4px;top:34px;font-size:10px;-webkit-text-stroke:0.35px #000;letter-spacing:-0.2px">回折格子</div>
 <div class="a ui hk" style="left:54.5px;top:32.5px;font-size:11px;letter-spacing:-1.3px">ﾌﾟﾘｽﾞﾑ</div>
 <div id="grid" class="a"><div class="vl" style="left:26px"></div><div class="vl" style="left:77px"></div><div class="vl" style="left:153px"></div><div class="vl" style="left:229px"></div><div class="hl" style="top:16px"></div><div class="hl" style="top:32px"></div><div class="hl" style="top:48px"></div><div class="hl" style="top:64px"></div><div class="hl" style="top:81px"></div><div class="hl" style="top:97px"></div><div class="hl" style="top:113px"></div><div class="hl" style="top:129px"></div><div class="hl" style="top:145px"></div><div class="hl" style="top:161px"></div><div class="hl" style="top:177px"></div><div class="a" style="left:78px;top:130px;width:4px;height:15px;background:#99c9ef"></div><div class="a" style="left:82px;top:130px;width:71px;height:15px;background:#ffff00"></div><div class="t hk" style="left:32px;top:4px;font-size:11px;letter-spacing:-0.75px;transform:none">ﾋﾟｸｾﾙ</div><div class="t hk" style="left:83px;top:4px;font-size:10px;transform:none">波長</div><div class="t hk" style="left:160px;top:4px;font-size:10px;letter-spacing:-1.5px;transform:none">残り</div><div class="t" style="left:8px;top:19px">1</div><div class="t" style="left:33px;top:19px">59.9</div><div class="t" style="left:84.0px;top:19px">0</div><div class="t" style="left:160px;top:19px">-0.502</div><div class="t" style="left:8px;top:35px">2</div><div class="t" style="left:33px;top:35px">668.7</div><div class="t" style="left:84.0px;top:35px">4383</div><div class="t" style="left:160px;top:35px">2.232</div><div class="t" style="left:8px;top:51px">3</div><div class="t" style="left:33px;top:51px">748.9</div><div class="t" style="left:84.0px;top:51px">4957</div><div class="t" style="left:160px;top:51px">-0.801</div><div class="t" style="left:8px;top:67px">4</div><div class="t" style="left:33px;top:67px">778.0</div><div class="t" style="left:84.0px;top:67px">5168</div><div class="t" style="left:160px;top:67px">0.827</div><div class="t" style="left:8px;top:84px">5</div><div class="t" style="left:33px;top:84px">787.0</div><div class="t" style="left:84.0px;top:84px">5230</div><div class="t" style="left:160px;top:84px">-1.927</div><div class="t" style="left:8px;top:100px">6</div><div class="t" style="left:33px;top:100px">792.1</div><div class="t" style="left:84.0px;top:100px">5269</div><div class="t" style="left:160px;top:100px">0.379</div><div class="t" style="left:8px;top:116px">7</div><div class="t" style="left:33px;top:116px">814.3</div><div class="t" style="left:84.0px;top:116px">5430</div><div class="t" style="left:160px;top:116px">1.652</div><div class="t" style="left:8px;top:132px">8</div><div class="t" style="left:33px;top:132px">879.0</div><div class="t" style="left:82.5px;top:132px">5892</div><div class="t" style="left:160px;top:132px">-1.860</div><div class="t" style="left:8px;top:148px">9</div><div class="t" style="left:33px;top:148px"></div><div class="t" style="left:84.0px;top:148px"></div><div class="t" style="left:160px;top:148px"></div><div class="t" style="left:8px;top:164px">10</div><div class="t" style="left:33px;top:164px"></div><div class="t" style="left:84.0px;top:164px"></div><div class="t" style="left:160px;top:164px"></div></div>

 <div class="a grp" style="left:271px;top:294px;width:106px;height:161px"></div>
 <div class="a ui hk" style="left:278px;top:289.5px;background:#f9f9f9;padding:0 1px;font-size:11px;-webkit-text-stroke:0.2px #000">次</div>
 <div class="a radio on" style="left:286px;top:307px"></div>
 <div class="a radio" style="left:286px;top:328px"></div>
 <div class="a radio" style="left:286px;top:349px"></div>
 <div class="a radio" style="left:286px;top:370px"></div>
 <div class="a ui" style="left:303px;top:308px;font-size:11px;letter-spacing:-0.5px">1<span class="hk" style="font-size:10px">次</span></div>
 <div class="a ui" style="left:303px;top:329px;font-size:11px;letter-spacing:-0.5px">2<span class="hk" style="font-size:10px">次</span></div>
 <div class="a ui" style="left:303px;top:350px;font-size:11px;letter-spacing:-0.5px">3<span class="hk" style="font-size:10px">次</span></div>
 <div class="a ui" style="left:303px;top:371px;font-size:11px;letter-spacing:-0.5px">4<span class="hk" style="font-size:10px">次</span></div>
 <div class="a btn ui" style="left:288px;top:395px;width:73px;height:23px;border-color:#0067c0;padding-top:5px;font-size:10px;letter-spacing:0.3px;-webkit-text-stroke:0.2px #000;background:#fff">計算</div>
 <div class="a ui" style="left:288px;top:430px;font-size:11px;letter-spacing:-0.15px">RMS値: 1.6634</div>

 <div class="a grp" style="left:406px;top:290px;width:117px;height:200px"></div>
 <div class="a ui hk" style="left:412px;top:286px;background:#f9f9f9;padding:0 1px;font-size:10px;letter-spacing:0.07px;-webkit-text-stroke:0.2px #000">ﾃﾞﾌｫﾙﾄ</div>
 <div class="a btn ui hk" style="left:424px;top:302px;width:79px;padding-right:2px;height:31px;padding-top:1.5px;font-size:10px;line-height:14px;letter-spacing:-0.45px;-webkit-text-stroke:0.2px #000">工場出荷時の設<br><span style="letter-spacing:-0.1px">定をﾛｰﾄﾞ</span></div>
 <div class="a btn ui hk" style="left:424px;top:342px;width:79px;padding-right:1.5px;height:31px;padding-top:1.5px;font-size:10px;line-height:14px;letter-spacing:-0.1px;-webkit-text-stroke:0.2px #000">起動時のﾃﾞﾌｫﾙﾄ<br>をﾘﾛｰﾄﾞ</div>
 <div class="a btn ui hk" style="left:424px;top:382px;width:79px;height:31px;padding-top:1.5px;font-size:10px;line-height:14px;letter-spacing:-0.5px;-webkit-text-stroke:0.2px #000">起動時のﾃﾞﾌｫﾙﾄと<br>して保存</div>
 <div class="a ui hk" style="left:447px;top:425px;font-size:10px;color:#0066cc;text-decoration:underline;font-weight:bold">履歴</div>
 <div class="a" style="left:417px;top:448px;width:13px;height:13px;border:1px solid #8a8a8a;border-radius:3px;background:#f3f3f3"></div>
 <div class="a ui hk" style="left:432px;top:443px;font-size:10px;line-height:14px;letter-spacing:-0.3px;-webkit-text-stroke:0.2px #000">起動時にﾃﾞﾌｫﾙﾄ値<br>を適用</div>
</div>

<svg class="a" style="left:0;top:0" width="530" height="310" viewBox="0 0 530 310"><rect x="18" y="91" width="480" height="209" fill="#000"/><rect x="76.5" y="103.5" width="405" height="148" fill="none" stroke="#008000" stroke-width="1"/><line x1="71.5" y1="103" x2="71.5" y2="252" stroke="#fff" stroke-width="1"/><line x1="76" y1="257.5" x2="482" y2="257.5" stroke="#fff" stroke-width="1"/><line x1="65" y1="243.5" x2="71" y2="243.5" stroke="#fff"/><text x="63" y="247.2" fill="#fff" font-family="Liberation Sans,sans-serif" font-size="11" text-anchor="end">0</text><line x1="65" y1="206.5" x2="71" y2="206.5" stroke="#fff"/><text x="63" y="210.2" fill="#fff" font-family="Liberation Sans,sans-serif" font-size="11" text-anchor="end">2000</text><line x1="65" y1="169.5" x2="71" y2="169.5" stroke="#fff"/><text x="63" y="173.2" fill="#fff" font-family="Liberation Sans,sans-serif" font-size="11" text-anchor="end">4000</text><line x1="65" y1="132.5" x2="71" y2="132.5" stroke="#fff"/><text x="63" y="136.2" fill="#fff" font-family="Liberation Sans,sans-serif" font-size="11" text-anchor="end">6000</text><line x1="76.5" y1="257" x2="76.5" y2="263" stroke="#fff"/><text x="76.5" y="277" fill="#fff" font-family="Liberation Sans,sans-serif" font-size="11" text-anchor="middle">0</text><line x1="116.5" y1="257" x2="116.5" y2="263" stroke="#fff"/><text x="116.5" y="277" fill="#fff" font-family="Liberation Sans,sans-serif" font-size="11" text-anchor="middle">100</text><line x1="157.5" y1="257" x2="157.5" y2="263" stroke="#fff"/><text x="157.5" y="277" fill="#fff" font-family="Liberation Sans,sans-serif" font-size="11" text-anchor="middle">200</text><line x1="198.5" y1="257" x2="198.5" y2="263" stroke="#fff"/><text x="198.5" y="277" fill="#fff" font-family="Liberation Sans,sans-serif" font-size="11" text-anchor="middle">300</text><line x1="238.5" y1="257" x2="238.5" y2="263" stroke="#fff"/><text x="238.5" y="277" fill="#fff" font-family="Liberation Sans,sans-serif" font-size="11" text-anchor="middle">400</text><line x1="278.5" y1="257" x2="278.5" y2="263" stroke="#fff"/><text x="278.5" y="277" fill="#fff" font-family="Liberation Sans,sans-serif" font-size="11" text-anchor="middle">500</text><line x1="319.5" y1="257" x2="319.5" y2="263" stroke="#fff"/><text x="319.5" y="277" fill="#fff" font-family="Liberation Sans,sans-serif" font-size="11" text-anchor="middle">600</text><line x1="360.5" y1="257" x2="360.5" y2="263" stroke="#fff"/><text x="360.5" y="277" fill="#fff" font-family="Liberation Sans,sans-serif" font-size="11" text-anchor="middle">700</text><line x1="400.5" y1="257" x2="400.5" y2="263" stroke="#fff"/><text x="400.5" y="277" fill="#fff" font-family="Liberation Sans,sans-serif" font-size="11" text-anchor="middle">800</text><line x1="440.5" y1="257" x2="440.5" y2="263" stroke="#fff"/><text x="440.5" y="277" fill="#fff" font-family="Liberation Sans,sans-serif" font-size="11" text-anchor="middle">900</text><line x1="481.5" y1="257" x2="481.5" y2="263" stroke="#fff"/><text x="481.5" y="277" fill="#fff" font-family="Liberation Sans,sans-serif" font-size="11" text-anchor="middle">1000</text><circle cx="100.8" cy="243.3" r="2.6" fill="#ff0000"/><circle cx="347.3" cy="162.2" r="2.6" fill="#ff0000"/><circle cx="379.8" cy="151.6" r="2.6" fill="#ff0000"/><circle cx="391.6" cy="147.7" r="2.6" fill="#ff0000"/><circle cx="395.2" cy="146.5" r="2.6" fill="#ff0000"/><circle cx="397.3" cy="145.8" r="2.6" fill="#ff0000"/><circle cx="406.3" cy="142.8" r="2.6" fill="#ff0000"/><circle cx="432.5" cy="134.3" r="2.6" fill="#ff0000"/><line x1="76.5" y1="251.3" x2="481.5" y2="118.2" stroke="#7070fa" stroke-width="1.25" shape-rendering="crispEdges"/><text transform="translate(33.5,192.5) rotate(-90)" fill="#fff" font-family="Liberation Serif,Noto Serif CJK SC,serif" font-weight="bold" font-size="15.5">波長</text><text x="255" y="295" fill="#ff0000" font-family="Liberation Sans,IPAGothic,sans-serif" font-weight="bold" font-size="15" textLength="43" lengthAdjust="spacingAndGlyphs">ﾋﾟｸｾﾙ</text></svg>
<div class="a" style="left:0;top:485px;width:537px;height:5px;background:#f0f0f0"></div>
<div class="a" style="left:0;top:485px;width:4px;height:5px;background:#dcdcdc"></div>
</body></html>
